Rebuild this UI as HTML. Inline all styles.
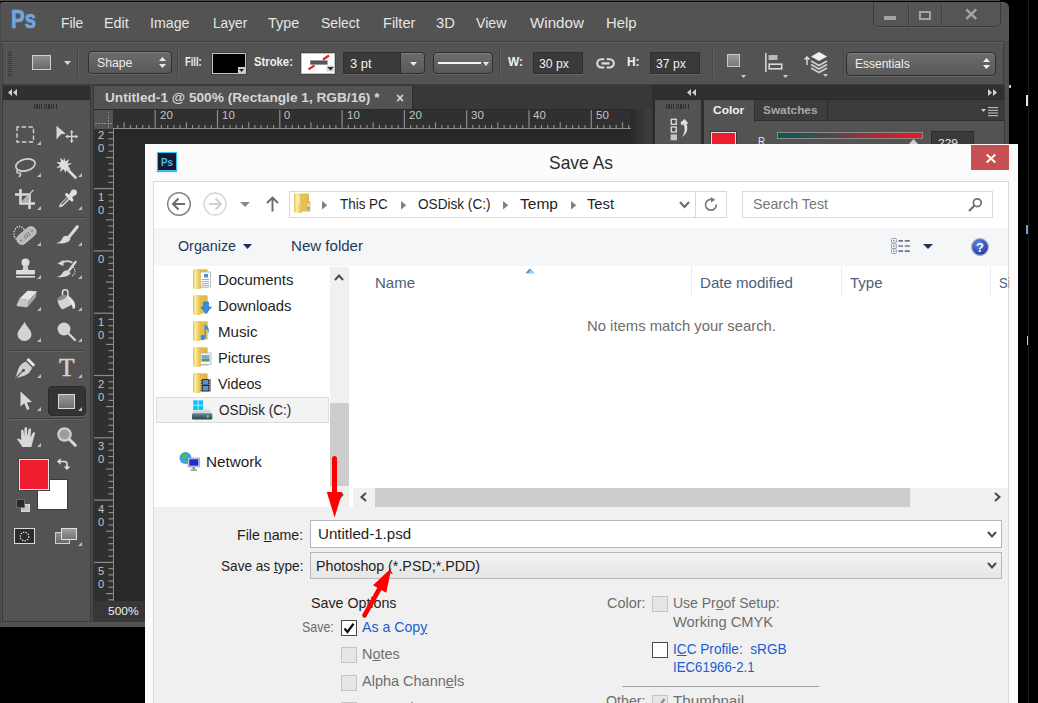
<!DOCTYPE html>
<html><head><meta charset="utf-8"><title>Save As</title>
<style>
html,body{margin:0;padding:0;background:#000;}
body{width:1038px;height:703px;overflow:hidden;position:relative;font-family:"Liberation Sans",sans-serif;}
.r{position:absolute;box-sizing:border-box;}
.t{position:absolute;white-space:nowrap;line-height:1;transform-origin:0 0;font-family:"Liberation Sans",sans-serif;}
svg{position:absolute;overflow:visible;}
u{text-decoration:underline;text-underline-offset:1px;}
</style></head><body>
<div class="r" style="left:0px;top:0px;width:1000px;height:1px;background:#4c4c4c;"></div>
<div class="r" style="left:0px;top:2px;width:1009px;height:625px;background:#535353;border-radius:3px 6px 0 0;border-top:1px solid #626262;"></div>
<div class="r" style="left:0px;top:4px;width:1px;height:623px;background:#484848;"></div>
<div class="r" style="left:1px;top:41px;width:1003px;height:1px;background:#3b3b3b;"></div>
<div class="r" style="left:2px;top:42px;width:1001px;height:1px;background:#636363;"></div>
<span class="t" style="left:11.3px;top:7.0px;font-size:25.8px;color:#70a6de;transform:scaleX(0.792);font-weight:bold;-webkit-text-stroke:0.7px #70a6de;">Ps</span>
<span class="t" style="left:60.7px;top:15.3px;font-size:15px;color:#e6e6e6;transform:scaleX(0.918);">File</span>
<span class="t" style="left:104.0px;top:15.3px;font-size:15px;color:#e6e6e6;transform:scaleX(0.956);">Edit</span>
<span class="t" style="left:150.3px;top:15.3px;font-size:15px;color:#e6e6e6;transform:scaleX(0.947);">Image</span>
<span class="t" style="left:212.5px;top:15.3px;font-size:15px;color:#e6e6e6;transform:scaleX(0.914);">Layer</span>
<span class="t" style="left:267.8px;top:15.3px;font-size:15px;color:#e6e6e6;transform:scaleX(0.966);">Type</span>
<span class="t" style="left:321.4px;top:15.3px;font-size:15px;color:#e6e6e6;transform:scaleX(0.926);">Select</span>
<span class="t" style="left:382.7px;top:15.3px;font-size:15px;color:#e6e6e6;transform:scaleX(0.969);">Filter</span>
<span class="t" style="left:436.2px;top:15.3px;font-size:15px;color:#e6e6e6;transform:scaleX(0.980);">3D</span>
<span class="t" style="left:476.0px;top:15.3px;font-size:15px;color:#e6e6e6;transform:scaleX(0.943);">View</span>
<span class="t" style="left:529.5px;top:15.3px;font-size:15px;color:#e6e6e6;transform:scaleX(1.010);">Window</span>
<span class="t" style="left:605.8px;top:15.3px;font-size:15px;color:#e6e6e6;transform:scaleX(0.985);">Help</span>
<div class="r" style="left:873px;top:2px;width:128px;height:24.5px;background:#555555;border:1px solid #3c3c3c;border-top:none;border-radius:0 0 5px 5px;box-shadow:0 1px 0 #606060;"></div>
<div class="r" style="left:907.5px;top:3px;width:1px;height:22.5px;background:#404040;"></div>
<div class="r" style="left:908.5px;top:3px;width:1px;height:22.5px;background:#5e5e5e;"></div>
<div class="r" style="left:940.5px;top:3px;width:1px;height:22.5px;background:#404040;"></div>
<div class="r" style="left:941.5px;top:3px;width:1px;height:22.5px;background:#5e5e5e;"></div>
<div class="r" style="left:884px;top:16.2px;width:12.4px;height:4px;background:#a4a4a4;"></div>
<div class="r" style="left:919px;top:10.5px;width:12.3px;height:9.8px;background:transparent;border:2px solid #a4a4a4;"></div>
<svg style="left:964.500px;top:9.200px" width="12.500" height="10.200" viewBox="0 0 12.500 10.200"><path d="M1.300 0.300L11.200 9.900M11.200 0.300L1.300 9.900" stroke="#a4a4a4" stroke-width="2.500"/></svg>
<div class="r" style="left:1.5px;top:43px;width:1002.5px;height:42px;background:#535353;border:1px solid #3e3e3e;border-top:none;"></div>
<div class="r" style="left:1004px;top:41px;width:5px;height:45px;background:#4e4e4e;"></div>
<div class="r" style="left:8px;top:51px;width:4px;height:25px;background:transparent;background:repeating-linear-gradient(#3c3c3c 0 1px,#535353 1px 2px);"></div>
<div class="r" style="left:32.4px;top:55.3px;width:18.2px;height:15.2px;background:linear-gradient(#8e8e8e,#6a6a6a);border:1px solid #d0d0d0;"></div>
<svg style="left:64px;top:61px" width="7" height="4"><path d="M0 0H7L3.5 4Z" fill="#d8d8d8"/></svg>
<div class="r" style="left:77px;top:49px;width:1px;height:28px;background:#444;"></div>
<div class="r" style="left:78px;top:49px;width:1px;height:28px;background:#616161;"></div>
<div class="r" style="left:88px;top:51.3px;width:84px;height:23.2px;background:linear-gradient(#6c6c6c,#595959);border:1px solid #2e2e2e;border-radius:4px;box-shadow:0 1px 0 #666,inset 0 1px 0 #7d7d7d;"></div>
<span class="t" style="left:97.3px;top:55.5px;font-size:13px;color:#ececec;transform:scaleX(0.939);">Shape</span>
<svg style="left:159px;top:57px" width="7" height="11"><path d="M0 4H7L3.5 0Z M0 7H7L3.5 11Z" fill="#e8e8e8"/></svg>
<div class="r" style="left:177px;top:49px;width:1px;height:28px;background:#444;"></div>
<div class="r" style="left:178px;top:49px;width:1px;height:28px;background:#616161;"></div>
<span class="t" style="left:185.4px;top:56.3px;font-size:12px;color:#f0f0f0;transform:scaleX(0.778);font-weight:bold;">Fill:</span>
<div class="r" style="left:212.3px;top:52.5px;width:33.5px;height:21px;background:#000;border:1px solid #c4c4c4;box-shadow:0 0 0 1px #444;"></div>
<div class="r" style="left:238px;top:67px;width:7px;height:6px;background:#cfcfcf;"></div>
<svg style="left:239px;top:69px" width="5" height="3"><path d="M0 0H5L2.5 3Z" fill="#222"/></svg>
<span class="t" style="left:254.0px;top:56.3px;font-size:12px;color:#f0f0f0;transform:scaleX(0.941);font-weight:bold;">Stroke:</span>
<div class="r" style="left:301.2px;top:52.5px;width:34.2px;height:21px;background:#fff;border:1px solid #c4c4c4;box-shadow:0 0 0 1px #444;"></div>
<svg style="left:302px;top:53px" width="33" height="20"><path d="M6.500 16.300L12.500 12.300M21 6.500L27 2.500" stroke="#e0202a" stroke-width="2.200"/><rect x="8.200" y="7.400" width="17.300" height="4.200" fill="#555"/><rect x="24.500" y="12.500" width="8" height="6" fill="#d8d8d8"/><path d="M25.300 14H31.700L28.500 17.500Z" fill="#2a2a2a"/></svg>
<div class="r" style="left:343px;top:51.6px;width:58px;height:22.8px;background:#3a3a3a;border:1px solid #2e2e2e;border-right:none;border-radius:2px 0 0 2px;box-shadow:0 1px 0 #666;"></div>
<div class="r" style="left:400px;top:51.6px;width:25px;height:22.8px;background:linear-gradient(#6c6c6c,#595959);border:1px solid #2e2e2e;border-radius:0 4px 4px 0;box-shadow:0 1px 0 #666,inset 0 1px 0 #7d7d7d;"></div>
<svg style="left:410px;top:62px" width="7" height="4"><path d="M0 0H7L3.5 4Z" fill="#e8e8e8"/></svg>
<span class="t" style="left:350.0px;top:56.5px;font-size:13px;color:#f0f0f0;transform:scaleX(0.992);">3 pt</span>
<div class="r" style="left:433px;top:51.6px;width:60px;height:22.8px;background:linear-gradient(#6c6c6c,#595959);border:1px solid #2e2e2e;border-radius:4px;box-shadow:0 1px 0 #666,inset 0 1px 0 #7d7d7d;"></div>
<div class="r" style="left:438px;top:62px;width:43px;height:2px;background:#f4f4f4;"></div>
<svg style="left:483px;top:62px" width="6" height="4"><path d="M0 0H6L3 4Z" fill="#e8e8e8"/></svg>
<div class="r" style="left:499px;top:49px;width:1px;height:28px;background:#444;"></div>
<div class="r" style="left:500px;top:49px;width:1px;height:28px;background:#616161;"></div>
<span class="t" style="left:508.3px;top:55.8px;font-size:12px;color:#f0f0f0;transform:scaleX(0.993);font-weight:bold;">W:</span>
<div class="r" style="left:533px;top:51.6px;width:50px;height:22.8px;background:#3a3a3a;border:1px solid #2e2e2e;box-shadow:0 1px 0 #666;"></div>
<span class="t" style="left:539.0px;top:56.5px;font-size:13px;color:#f0f0f0;transform:scaleX(0.943);">30 px</span>
<svg style="left:595.500px;top:57.500px" width="19" height="11" viewBox="0 0 19 11"><path d="M8.300 1.300H5.300a4.100 4.100 0 0 0 0 8.200H8.300M10.700 1.300H13.700a4.100 4.100 0 0 1 0 8.200H10.700" fill="none" stroke="#dcdcdc" stroke-width="2.100"/><path d="M5.500 5.400H13.500" stroke="#dcdcdc" stroke-width="2.300"/></svg>
<span class="t" style="left:627.4px;top:55.8px;font-size:12px;color:#f0f0f0;transform:scaleX(0.995);font-weight:bold;">H:</span>
<div class="r" style="left:650px;top:51.6px;width:50px;height:22.8px;background:#3a3a3a;border:1px solid #2e2e2e;box-shadow:0 1px 0 #666;"></div>
<span class="t" style="left:655.9px;top:56.5px;font-size:13px;color:#f0f0f0;transform:scaleX(0.937);">37 px</span>
<div class="r" style="left:712px;top:49px;width:1px;height:28px;background:#444;"></div>
<div class="r" style="left:713px;top:49px;width:1px;height:28px;background:#616161;"></div>
<div class="r" style="left:727px;top:54px;width:13px;height:13px;background:linear-gradient(#9a9a9a,#7a7a7a);border:1px solid #c8c8c8;"></div>
<svg style="left:741px;top:75px" width="5" height="3"><path d="M0 0H5L2.5 3Z" fill="#cfcfcf"/></svg>
<svg style="left:765px;top:53px" width="18" height="19"><rect x="0" y="0" width="1.6" height="19" fill="#d0d0d0"/><rect x="3.5" y="2" width="9" height="5" fill="#b8b8b8"/><rect x="4.2" y="11.2" width="12.5" height="4.6" fill="none" stroke="#d8d8d8" stroke-width="1.6"/></svg>
<svg style="left:783px;top:75px" width="5" height="3"><path d="M0 0H5L2.5 3Z" fill="#cfcfcf"/></svg>
<svg style="left:803px;top:51px" width="26" height="26" viewBox="0 0 26 26"><path d="M4 6v8M1.5 8.5L4 6l2.5 2.5" stroke="#e0e0e0" stroke-width="1.4" fill="none"/><path d="M16 1l8 4.5-8 4.5-8-4.5z" fill="#f0f0f0"/><path d="M8 10l8 4.5 8-4.5M8 13.5l8 4.5 8-4.5M8 17l8 4.5 8-4.5" stroke="#cfcfcf" stroke-width="1.8" fill="none"/><path d="M20 23h5l-2.5 3z" fill="#cfcfcf"/></svg>
<div class="r" style="left:843px;top:49px;width:1px;height:28px;background:#444;"></div>
<div class="r" style="left:844px;top:49px;width:1px;height:28px;background:#616161;"></div>
<div class="r" style="left:846px;top:52px;width:150px;height:24px;background:linear-gradient(#6c6c6c,#595959);border:1px solid #2e2e2e;border-radius:4px;box-shadow:0 1px 0 #666,inset 0 1px 0 #7d7d7d;"></div>
<span class="t" style="left:855.0px;top:57.0px;font-size:13px;color:#f0f0f0;transform:scaleX(0.922);">Essentials</span>
<svg style="left:983px;top:58px" width="7" height="11"><path d="M0 4H7L3.5 0Z M0 7H7L3.5 11Z" fill="#f0f0f0"/></svg>
<div class="r" style="left:2px;top:85px;width:89px;height:537px;background:#535353;border:1px solid #3a3a3a;"></div>
<div class="r" style="left:3px;top:85.5px;width:87px;height:13.5px;background:#303030;"></div>
<svg style="left:8px;top:89px" width="9" height="7"><path d="M4 0V7L0 3.5Z M9 0V7L5 3.5Z" fill="#d0d0d0"/></svg>
<div class="r" style="left:3px;top:99px;width:87px;height:1px;background:#2a2a2a;"></div>
<div class="r" style="left:34px;top:104px;width:24px;height:5px;background:transparent;background:repeating-linear-gradient(90deg,#303030 0 1.2px,#535353 1.2px 2.4px);"></div>
<div class="r" style="left:9px;top:217px;width:76px;height:1px;background:#404040;"></div>
<div class="r" style="left:9px;top:218px;width:76px;height:1px;background:#626262;"></div>
<div class="r" style="left:9px;top:350px;width:76px;height:1px;background:#404040;"></div>
<div class="r" style="left:9px;top:351px;width:76px;height:1px;background:#626262;"></div>
<div class="r" style="left:9px;top:418px;width:76px;height:1px;background:#404040;"></div>
<div class="r" style="left:9px;top:419px;width:76px;height:1px;background:#626262;"></div>
<div class="r" style="left:93px;top:85px;width:561px;height:24px;background:#383838;"></div>
<div class="r" style="left:93px;top:86px;width:319.5px;height:23px;background:#535353;border:1px solid #2c2c2c;border-bottom:none;border-top:none;"></div>
<span class="t" style="left:105.0px;top:91.0px;font-size:13px;color:#d6d6d6;transform:scaleX(1.051);font-weight:bold;">Untitled-1 @ 500% (Rectangle 1, RGB/16) *</span>
<span class="t" style="left:395.5px;top:89.8px;font-size:15px;color:#d4d4d4;transform:scaleX(0.913);font-weight:bold;">×</span>
<div class="r" style="left:93px;top:109px;width:561px;height:20px;background:#303030;"></div>
<div class="r" style="left:93px;top:109px;width:561px;height:1px;background:#2a2a2a;"></div>
<div class="r" style="left:94px;top:110px;width:19px;height:19px;background:#535353;background-image:repeating-linear-gradient(90deg,#535353 0 1.5px,transparent 1.5px 3px),linear-gradient(transparent 13px,#8a8a8a 13px,#8a8a8a 14px,transparent 14px),repeating-linear-gradient(#535353 0 1.5px,transparent 1.5px 3px),linear-gradient(90deg,transparent 14px,#8a8a8a 14px,#8a8a8a 15px,transparent 15px);"></div>
<div class="r" style="left:93px;top:129px;width:21px;height:472px;background:#303030;"></div>
<div class="r" style="left:114px;top:129px;width:540px;height:472px;background:#282828;"></div>
<div class="r" style="left:113px;top:128px;width:541px;height:1px;background:#8c8c8c;"></div>
<div class="r" style="left:112.5px;top:129px;width:1px;height:472px;background:#8c8c8c;"></div>
<div class="r" style="left:93px;top:601px;width:561px;height:21px;background:#373737;"></div>
<div class="r" style="left:90px;top:85px;width:1px;height:537px;background:#3a3a3a;"></div>
<div class="r" style="left:91px;top:85px;width:2px;height:537px;background:#484848;"></div>
<div class="r" style="left:93px;top:85px;width:1px;height:537px;background:#353535;"></div>
<span class="t" style="left:107.5px;top:605.5px;font-size:11px;color:#f0f0f0;transform:scaleX(1.084);">500%</span>
<svg style="left:0;top:109px" width="660" height="20"><rect x="117.2" y="16" width="1.2" height="4" fill="#8c8c8c"/><rect x="123.5" y="13.3" width="1.2" height="6.7" fill="#8c8c8c"/><rect x="129.7" y="16" width="1.2" height="4" fill="#8c8c8c"/><rect x="135.9" y="16" width="1.2" height="4" fill="#8c8c8c"/><rect x="142.1" y="16" width="1.2" height="4" fill="#8c8c8c"/><rect x="148.4" y="16" width="1.2" height="4" fill="#8c8c8c"/><rect x="154.6" y="1" width="1.2" height="19" fill="#8c8c8c"/><rect x="160.8" y="16" width="1.2" height="4" fill="#8c8c8c"/><rect x="167.1" y="16" width="1.2" height="4" fill="#8c8c8c"/><rect x="173.3" y="16" width="1.2" height="4" fill="#8c8c8c"/><rect x="179.5" y="16" width="1.2" height="4" fill="#8c8c8c"/><rect x="185.8" y="13.3" width="1.2" height="6.7" fill="#8c8c8c"/><rect x="192.0" y="16" width="1.2" height="4" fill="#8c8c8c"/><rect x="198.2" y="16" width="1.2" height="4" fill="#8c8c8c"/><rect x="204.4" y="16" width="1.2" height="4" fill="#8c8c8c"/><rect x="210.7" y="16" width="1.2" height="4" fill="#8c8c8c"/><rect x="216.9" y="1" width="1.2" height="19" fill="#8c8c8c"/><rect x="223.1" y="16" width="1.2" height="4" fill="#8c8c8c"/><rect x="229.4" y="16" width="1.2" height="4" fill="#8c8c8c"/><rect x="235.6" y="16" width="1.2" height="4" fill="#8c8c8c"/><rect x="241.8" y="16" width="1.2" height="4" fill="#8c8c8c"/><rect x="248.1" y="13.3" width="1.2" height="6.7" fill="#8c8c8c"/><rect x="254.3" y="16" width="1.2" height="4" fill="#8c8c8c"/><rect x="260.5" y="16" width="1.2" height="4" fill="#8c8c8c"/><rect x="266.7" y="16" width="1.2" height="4" fill="#8c8c8c"/><rect x="273.0" y="16" width="1.2" height="4" fill="#8c8c8c"/><rect x="279.2" y="1" width="1.2" height="19" fill="#8c8c8c"/><rect x="285.4" y="16" width="1.2" height="4" fill="#8c8c8c"/><rect x="291.7" y="16" width="1.2" height="4" fill="#8c8c8c"/><rect x="297.9" y="16" width="1.2" height="4" fill="#8c8c8c"/><rect x="304.1" y="16" width="1.2" height="4" fill="#8c8c8c"/><rect x="310.3" y="13.3" width="1.2" height="6.7" fill="#8c8c8c"/><rect x="316.6" y="16" width="1.2" height="4" fill="#8c8c8c"/><rect x="322.8" y="16" width="1.2" height="4" fill="#8c8c8c"/><rect x="329.0" y="16" width="1.2" height="4" fill="#8c8c8c"/><rect x="335.3" y="16" width="1.2" height="4" fill="#8c8c8c"/><rect x="341.5" y="1" width="1.2" height="19" fill="#8c8c8c"/><rect x="347.7" y="16" width="1.2" height="4" fill="#8c8c8c"/><rect x="354.0" y="16" width="1.2" height="4" fill="#8c8c8c"/><rect x="360.2" y="16" width="1.2" height="4" fill="#8c8c8c"/><rect x="366.4" y="16" width="1.2" height="4" fill="#8c8c8c"/><rect x="372.6" y="13.3" width="1.2" height="6.7" fill="#8c8c8c"/><rect x="378.9" y="16" width="1.2" height="4" fill="#8c8c8c"/><rect x="385.1" y="16" width="1.2" height="4" fill="#8c8c8c"/><rect x="391.3" y="16" width="1.2" height="4" fill="#8c8c8c"/><rect x="397.6" y="16" width="1.2" height="4" fill="#8c8c8c"/><rect x="403.8" y="1" width="1.2" height="19" fill="#8c8c8c"/><rect x="410.0" y="16" width="1.2" height="4" fill="#8c8c8c"/><rect x="416.3" y="16" width="1.2" height="4" fill="#8c8c8c"/><rect x="422.5" y="16" width="1.2" height="4" fill="#8c8c8c"/><rect x="428.7" y="16" width="1.2" height="4" fill="#8c8c8c"/><rect x="434.9" y="13.3" width="1.2" height="6.7" fill="#8c8c8c"/><rect x="441.2" y="16" width="1.2" height="4" fill="#8c8c8c"/><rect x="447.4" y="16" width="1.2" height="4" fill="#8c8c8c"/><rect x="453.6" y="16" width="1.2" height="4" fill="#8c8c8c"/><rect x="459.9" y="16" width="1.2" height="4" fill="#8c8c8c"/><rect x="466.1" y="1" width="1.2" height="19" fill="#8c8c8c"/><rect x="472.3" y="16" width="1.2" height="4" fill="#8c8c8c"/><rect x="478.6" y="16" width="1.2" height="4" fill="#8c8c8c"/><rect x="484.8" y="16" width="1.2" height="4" fill="#8c8c8c"/><rect x="491.0" y="16" width="1.2" height="4" fill="#8c8c8c"/><rect x="497.2" y="13.3" width="1.2" height="6.7" fill="#8c8c8c"/><rect x="503.5" y="16" width="1.2" height="4" fill="#8c8c8c"/><rect x="509.7" y="16" width="1.2" height="4" fill="#8c8c8c"/><rect x="515.9" y="16" width="1.2" height="4" fill="#8c8c8c"/><rect x="522.2" y="16" width="1.2" height="4" fill="#8c8c8c"/><rect x="528.4" y="1" width="1.2" height="19" fill="#8c8c8c"/><rect x="534.6" y="16" width="1.2" height="4" fill="#8c8c8c"/><rect x="540.9" y="16" width="1.2" height="4" fill="#8c8c8c"/><rect x="547.1" y="16" width="1.2" height="4" fill="#8c8c8c"/><rect x="553.3" y="16" width="1.2" height="4" fill="#8c8c8c"/><rect x="559.6" y="13.3" width="1.2" height="6.7" fill="#8c8c8c"/><rect x="565.8" y="16" width="1.2" height="4" fill="#8c8c8c"/><rect x="572.0" y="16" width="1.2" height="4" fill="#8c8c8c"/><rect x="578.2" y="16" width="1.2" height="4" fill="#8c8c8c"/><rect x="584.5" y="16" width="1.2" height="4" fill="#8c8c8c"/><rect x="590.7" y="1" width="1.2" height="19" fill="#8c8c8c"/><rect x="596.9" y="16" width="1.2" height="4" fill="#8c8c8c"/><rect x="603.2" y="16" width="1.2" height="4" fill="#8c8c8c"/><rect x="609.4" y="16" width="1.2" height="4" fill="#8c8c8c"/><rect x="615.6" y="16" width="1.2" height="4" fill="#8c8c8c"/><rect x="621.9" y="13.3" width="1.2" height="6.7" fill="#8c8c8c"/><rect x="628.1" y="16" width="1.2" height="4" fill="#8c8c8c"/><rect x="634.3" y="16" width="1.2" height="4" fill="#8c8c8c"/><rect x="640.5" y="16" width="1.2" height="4" fill="#8c8c8c"/><rect x="646.8" y="16" width="1.2" height="4" fill="#8c8c8c"/></svg>
<span class="t" style="left:159.6px;top:110.4px;font-size:11px;color:#c4c4c4;transform:scaleX(1.046);">20</span>
<span class="t" style="left:221.9px;top:110.4px;font-size:11px;color:#c4c4c4;transform:scaleX(1.046);">10</span>
<span class="t" style="left:284.2px;top:110.4px;font-size:11px;color:#c4c4c4;transform:scaleX(1.013);">0</span>
<span class="t" style="left:346.5px;top:110.4px;font-size:11px;color:#c4c4c4;transform:scaleX(1.046);">10</span>
<span class="t" style="left:408.8px;top:110.4px;font-size:11px;color:#c4c4c4;transform:scaleX(1.046);">20</span>
<span class="t" style="left:471.1px;top:110.4px;font-size:11px;color:#c4c4c4;transform:scaleX(1.046);">30</span>
<span class="t" style="left:533.4px;top:110.4px;font-size:11px;color:#c4c4c4;transform:scaleX(1.046);">40</span>
<span class="t" style="left:595.7px;top:110.4px;font-size:11px;color:#c4c4c4;transform:scaleX(1.046);">50</span>
<svg style="left:93px;top:129px" width="21" height="472"><rect x="15.5" y="2.9" width="4.5" height="1.2" fill="#8c8c8c"/><rect x="15.5" y="9.2" width="4.5" height="1.2" fill="#8c8c8c"/><rect x="15.5" y="15.4" width="4.5" height="1.2" fill="#8c8c8c"/><rect x="15.5" y="21.6" width="4.5" height="1.2" fill="#8c8c8c"/><rect x="13" y="27.9" width="7" height="1.2" fill="#8c8c8c"/><rect x="15.5" y="34.1" width="4.5" height="1.2" fill="#8c8c8c"/><rect x="15.5" y="40.3" width="4.5" height="1.2" fill="#8c8c8c"/><rect x="15.5" y="46.5" width="4.5" height="1.2" fill="#8c8c8c"/><rect x="15.5" y="52.8" width="4.5" height="1.2" fill="#8c8c8c"/><rect x="1" y="59.0" width="19" height="1.2" fill="#8c8c8c"/><rect x="15.5" y="65.2" width="4.5" height="1.2" fill="#8c8c8c"/><rect x="15.5" y="71.5" width="4.5" height="1.2" fill="#8c8c8c"/><rect x="15.5" y="77.7" width="4.5" height="1.2" fill="#8c8c8c"/><rect x="15.5" y="83.9" width="4.5" height="1.2" fill="#8c8c8c"/><rect x="13" y="90.2" width="7" height="1.2" fill="#8c8c8c"/><rect x="15.5" y="96.4" width="4.5" height="1.2" fill="#8c8c8c"/><rect x="15.5" y="102.6" width="4.5" height="1.2" fill="#8c8c8c"/><rect x="15.5" y="108.8" width="4.5" height="1.2" fill="#8c8c8c"/><rect x="15.5" y="115.1" width="4.5" height="1.2" fill="#8c8c8c"/><rect x="1" y="121.3" width="19" height="1.2" fill="#8c8c8c"/><rect x="15.5" y="127.5" width="4.5" height="1.2" fill="#8c8c8c"/><rect x="15.5" y="133.8" width="4.5" height="1.2" fill="#8c8c8c"/><rect x="15.5" y="140.0" width="4.5" height="1.2" fill="#8c8c8c"/><rect x="15.5" y="146.2" width="4.5" height="1.2" fill="#8c8c8c"/><rect x="13" y="152.5" width="7" height="1.2" fill="#8c8c8c"/><rect x="15.5" y="158.7" width="4.5" height="1.2" fill="#8c8c8c"/><rect x="15.5" y="164.9" width="4.5" height="1.2" fill="#8c8c8c"/><rect x="15.5" y="171.1" width="4.5" height="1.2" fill="#8c8c8c"/><rect x="15.5" y="177.4" width="4.5" height="1.2" fill="#8c8c8c"/><rect x="1" y="183.6" width="19" height="1.2" fill="#8c8c8c"/><rect x="15.5" y="189.8" width="4.5" height="1.2" fill="#8c8c8c"/><rect x="15.5" y="196.1" width="4.5" height="1.2" fill="#8c8c8c"/><rect x="15.5" y="202.3" width="4.5" height="1.2" fill="#8c8c8c"/><rect x="15.5" y="208.5" width="4.5" height="1.2" fill="#8c8c8c"/><rect x="13" y="214.8" width="7" height="1.2" fill="#8c8c8c"/><rect x="15.5" y="221.0" width="4.5" height="1.2" fill="#8c8c8c"/><rect x="15.5" y="227.2" width="4.5" height="1.2" fill="#8c8c8c"/><rect x="15.5" y="233.4" width="4.5" height="1.2" fill="#8c8c8c"/><rect x="15.5" y="239.7" width="4.5" height="1.2" fill="#8c8c8c"/><rect x="1" y="245.9" width="19" height="1.2" fill="#8c8c8c"/><rect x="15.5" y="252.1" width="4.5" height="1.2" fill="#8c8c8c"/><rect x="15.5" y="258.4" width="4.5" height="1.2" fill="#8c8c8c"/><rect x="15.5" y="264.6" width="4.5" height="1.2" fill="#8c8c8c"/><rect x="15.5" y="270.8" width="4.5" height="1.2" fill="#8c8c8c"/><rect x="13" y="277.0" width="7" height="1.2" fill="#8c8c8c"/><rect x="15.5" y="283.3" width="4.5" height="1.2" fill="#8c8c8c"/><rect x="15.5" y="289.5" width="4.5" height="1.2" fill="#8c8c8c"/><rect x="15.5" y="295.7" width="4.5" height="1.2" fill="#8c8c8c"/><rect x="15.5" y="302.0" width="4.5" height="1.2" fill="#8c8c8c"/><rect x="1" y="308.2" width="19" height="1.2" fill="#8c8c8c"/><rect x="15.5" y="314.4" width="4.5" height="1.2" fill="#8c8c8c"/><rect x="15.5" y="320.7" width="4.5" height="1.2" fill="#8c8c8c"/><rect x="15.5" y="326.9" width="4.5" height="1.2" fill="#8c8c8c"/><rect x="15.5" y="333.1" width="4.5" height="1.2" fill="#8c8c8c"/><rect x="13" y="339.4" width="7" height="1.2" fill="#8c8c8c"/><rect x="15.5" y="345.6" width="4.5" height="1.2" fill="#8c8c8c"/><rect x="15.5" y="351.8" width="4.5" height="1.2" fill="#8c8c8c"/><rect x="15.5" y="358.0" width="4.5" height="1.2" fill="#8c8c8c"/><rect x="15.5" y="364.3" width="4.5" height="1.2" fill="#8c8c8c"/><rect x="1" y="370.5" width="19" height="1.2" fill="#8c8c8c"/><rect x="15.5" y="376.7" width="4.5" height="1.2" fill="#8c8c8c"/><rect x="15.5" y="383.0" width="4.5" height="1.2" fill="#8c8c8c"/><rect x="15.5" y="389.2" width="4.5" height="1.2" fill="#8c8c8c"/><rect x="15.5" y="395.4" width="4.5" height="1.2" fill="#8c8c8c"/><rect x="13" y="401.6" width="7" height="1.2" fill="#8c8c8c"/><rect x="15.5" y="407.9" width="4.5" height="1.2" fill="#8c8c8c"/><rect x="15.5" y="414.1" width="4.5" height="1.2" fill="#8c8c8c"/><rect x="15.5" y="420.3" width="4.5" height="1.2" fill="#8c8c8c"/><rect x="15.5" y="426.6" width="4.5" height="1.2" fill="#8c8c8c"/><rect x="1" y="432.8" width="19" height="1.2" fill="#8c8c8c"/><rect x="15.5" y="439.0" width="4.5" height="1.2" fill="#8c8c8c"/><rect x="15.5" y="445.3" width="4.5" height="1.2" fill="#8c8c8c"/><rect x="15.5" y="451.5" width="4.5" height="1.2" fill="#8c8c8c"/><rect x="15.5" y="457.7" width="4.5" height="1.2" fill="#8c8c8c"/><rect x="13" y="464.0" width="7" height="1.2" fill="#8c8c8c"/><rect x="15.5" y="470.2" width="4.5" height="1.2" fill="#8c8c8c"/></svg>
<span class="t" style="left:97.7px;top:129.7px;font-size:11px;color:#c4c4c4;transform:scaleX(1.013);">2</span>
<span class="t" style="left:97.7px;top:142.7px;font-size:11px;color:#c4c4c4;transform:scaleX(1.013);">0</span>
<span class="t" style="left:97.7px;top:192.0px;font-size:11px;color:#c4c4c4;transform:scaleX(1.013);">1</span>
<span class="t" style="left:97.7px;top:205.0px;font-size:11px;color:#c4c4c4;transform:scaleX(1.013);">0</span>
<span class="t" style="left:97.7px;top:254.3px;font-size:11px;color:#c4c4c4;transform:scaleX(1.013);">0</span>
<span class="t" style="left:97.7px;top:316.6px;font-size:11px;color:#c4c4c4;transform:scaleX(1.013);">1</span>
<span class="t" style="left:97.7px;top:329.6px;font-size:11px;color:#c4c4c4;transform:scaleX(1.013);">0</span>
<span class="t" style="left:97.7px;top:378.9px;font-size:11px;color:#c4c4c4;transform:scaleX(1.013);">2</span>
<span class="t" style="left:97.7px;top:391.9px;font-size:11px;color:#c4c4c4;transform:scaleX(1.013);">0</span>
<span class="t" style="left:97.7px;top:441.2px;font-size:11px;color:#c4c4c4;transform:scaleX(1.013);">3</span>
<span class="t" style="left:97.7px;top:454.2px;font-size:11px;color:#c4c4c4;transform:scaleX(1.013);">0</span>
<span class="t" style="left:97.7px;top:503.5px;font-size:11px;color:#c4c4c4;transform:scaleX(1.013);">4</span>
<span class="t" style="left:97.7px;top:516.5px;font-size:11px;color:#c4c4c4;transform:scaleX(1.013);">0</span>
<span class="t" style="left:97.7px;top:565.8px;font-size:11px;color:#c4c4c4;transform:scaleX(1.013);">5</span>
<span class="t" style="left:97.7px;top:578.8px;font-size:11px;color:#c4c4c4;transform:scaleX(1.013);">0</span>
<div class="r" style="left:631px;top:109px;width:21px;height:492px;background:linear-gradient(90deg,#2a2a2a,#3f3f3f);"></div>
<div class="r" style="left:651.5px;top:85px;width:3px;height:537px;background:#2f2f2f;"></div>
<div class="r" style="left:654px;top:85px;width:351px;height:60px;background:#535353;border-left:1px solid #2a2a2a;"></div>
<div class="r" style="left:655px;top:85px;width:349px;height:14px;background:#303030;"></div>
<svg style="left:687px;top:89px" width="9" height="7"><path d="M4 0V7L0 3.5Z M9 0V7L5 3.5Z" fill="#d0d0d0"/></svg>
<svg style="left:988px;top:89px" width="9" height="7"><path d="M0 0V7L4 3.5Z M5 0V7L9 3.5Z" fill="#d0d0d0"/></svg>
<div class="r" style="left:655px;top:99px;width:350px;height:1px;background:#2a2a2a;"></div>
<div class="r" style="left:701px;top:99px;width:3px;height:46px;background:#2e2e2e;"></div>
<div class="r" style="left:666px;top:104px;width:24px;height:5px;background:transparent;background:repeating-linear-gradient(90deg,#303030 0 1.2px,#535353 1.2px 2.4px);"></div>
<svg style="left:670px;top:117px" width="22" height="26"><rect x="1.3" y="2.3" width="5" height="5" fill="none" stroke="#d4d4d4" stroke-width="1.4"/><rect x="1.3" y="10" width="5" height="5" fill="none" stroke="#d4d4d4" stroke-width="1.4"/><rect x="0.6" y="17.3" width="6.400" height="6" fill="#c4c4c4"/><path d="M10.500 5.500l4-3.500l4 4.500l-2 .2c1.800 5 .8 10-4.500 13.300c3-4.500 3.300-8.500 1.500-12.800l-2 1.300z" fill="#e0e0e0"/></svg>
<div class="r" style="left:704px;top:100px;width:301px;height:21px;background:#3b3b3b;border-bottom:1px solid #2e2e2e;"></div>
<div class="r" style="left:704px;top:100px;width:51px;height:22px;background:#535353;border-right:1px solid #2e2e2e;"></div>
<div class="r" style="left:755px;top:100px;width:72.5px;height:21px;background:#3d3d3d;border-right:1px solid #2e2e2e;border-bottom:1px solid #2e2e2e;"></div>
<span class="t" style="left:713.0px;top:105.0px;font-size:11.8px;color:#f0f0f0;transform:scaleX(1.013);font-weight:bold;">Color</span>
<span class="t" style="left:762.5px;top:105.0px;font-size:11.8px;color:#a8a8a8;transform:scaleX(1.001);font-weight:bold;">Swatches</span>
<svg style="left:981px;top:107px" width="17" height="10"><path d="M0 2H5L2.5 5Z" fill="#c8c8c8"/><path d="M7 0.600H17M7 3.300H17M7 6H17M7 8.700H17" stroke="#c8c8c8" stroke-width="1"/></svg>
<div class="r" style="left:711px;top:132.3px;width:24.5px;height:14px;background:#ed1c2e;border:1.500px solid #e0e0e0;box-shadow:0 0 0 1px #3a3a3a;"></div>
<span class="t" style="left:758.0px;top:135.7px;font-size:11px;color:#e8e8e8;transform:scaleX(0.881);">R</span>
<div class="r" style="left:777px;top:132px;width:146px;height:7px;background:linear-gradient(90deg,#075a55,#4a4a4a 35%,#a03038 65%,#f01428);border:1px solid #8a8a8a;"></div>
<svg style="left:909px;top:139px" width="9" height="5"><path d="M0 5H9L4.5 0Z" fill="#cfcfcf"/></svg>
<div class="r" style="left:931px;top:131px;width:43px;height:14px;background:#3a3a3a;border:1px solid #2c2c2c;"></div>
<span class="t" style="left:938.0px;top:137.7px;font-size:11px;color:#e8e8e8;transform:scaleX(1.090);">229</span>
<div class="r" style="left:1004px;top:86px;width:1px;height:540px;background:#3a3a3a;"></div>
<div class="r" style="left:1005px;top:86px;width:4px;height:540px;background:#4e4e4e;"></div>
<div class="r" style="left:1028px;top:0px;width:1px;height:703px;background:#1c1c1c;"></div>
<div class="r" style="left:1026px;top:225px;width:2px;height:9px;background:#6aa0d8;"></div>
<div class="r" style="left:1026px;top:95px;width:1.6px;height:11px;background:#d4ecdc;"></div>
<div class="r" style="left:1009.3px;top:85px;width:2px;height:2.5px;background:#b0d0b8;"></div>
<div class="r" style="left:1026.5px;top:336px;width:1.6px;height:9px;background:#c8c8c8;"></div>
<svg style="left:16px;top:125.5px" width="18.5" height="17" viewBox="0 0 18.5 17"><rect x="1" y="1" width="16.500" height="15" fill="none" stroke="#d2d2d2" stroke-width="1.400" stroke-dasharray="4.500 2.300" stroke-dashoffset="2.200"/></svg>
<svg style="left:36.9px;top:141px" width="4" height="4" viewBox="0 0 4 4"><path d="M4 0V4H0Z" fill="#bdbdbd"/></svg>
<svg style="left:56px;top:125px" width="22" height="20" viewBox="0 0 22 20"><path d="M0.500 0.800L9.800 8.800L5 9.300L0.500 14.500Z" fill="#d6d6d6"/><path d="M15.700 6.500v10M10.700 11.500h10" stroke="#d6d6d6" stroke-width="1.300"/><path d="M15.700 5l2 2.600h-4zM15.700 18l2-2.600h-4zM9.200 11.500l2.600-2v4zM22.200 11.500l-2.600-2v4z" fill="#d6d6d6"/></svg>
<svg style="left:14px;top:157px" width="22" height="21" viewBox="0 0 22 21"><ellipse cx="11.500" cy="8" rx="9.800" ry="5.800" transform="rotate(-14 11.500 8)" fill="none" stroke="#d0d0d0" stroke-width="1.700"/><path d="M4 12.500c-2 1.500-1.500 4 1 3.500c2.500-.5 2 3-.3 3.800" fill="none" stroke="#d0d0d0" stroke-width="1.500"/></svg>
<svg style="left:36.9px;top:173px" width="4" height="4" viewBox="0 0 4 4"><path d="M4 0V4H0Z" fill="#bdbdbd"/></svg>
<svg style="left:55px;top:156.5px" width="23" height="22" viewBox="0 0 23 22"><path d="M9 0l1.300 4.500l4-2.500l-2 4.200l4.700.3l-4.200 2.300l3 3.700l-4.600-1.200l-.4 4.700l-2.300-4l-3.500 3l1-4.500l-4.700.2l3.800-2.800l-3.600-3l4.700.3l-1.200-4.500l3.700 3z" fill="#e0e0e0"/><path d="M11.500 11.500L20.500 20.500" stroke="#dcdcdc" stroke-width="2.600" stroke-linecap="round"/></svg>
<svg style="left:78.4px;top:173px" width="4" height="4" viewBox="0 0 4 4"><path d="M4 0V4H0Z" fill="#bdbdbd"/></svg>
<svg style="left:15px;top:189px" width="20" height="20" viewBox="0 0 20 20"><path d="M0 5.500h14.500v14.500M5.500 0v14.500h14.500" fill="none" stroke="#d8d8d8" stroke-width="2.600"/><path d="M7.500 12.500L18.500 1" stroke="#c8c8c8" stroke-width="1.200"/><path d="M7 13h6.500v-6.500z" fill="#b0b0b0"/></svg>
<svg style="left:36.9px;top:205.5px" width="4" height="4" viewBox="0 0 4 4"><path d="M4 0V4H0Z" fill="#bdbdbd"/></svg>
<svg style="left:56.5px;top:188.5px" width="20" height="20" viewBox="0 0 20 20"><path d="M1.200 19l1.300-4l8.500-8.500l3 3l-8.500 8.500z" fill="#dcdcdc" stroke="#3c3c3c" stroke-width=".7"/><path d="M4.500 15.500l7-7" stroke="#5a5a5a" stroke-width="1.300"/><path d="M9.500 5.500l5.500 5.500" stroke="#e4e4e4" stroke-width="3" stroke-linecap="round"/><path d="M13 7.500l3.500-3.500" stroke="#dcdcdc" stroke-width="4.600" stroke-linecap="round"/><circle cx="16.800" cy="3.500" r="3.100" fill="#e2e2e2"/></svg>
<svg style="left:78.4px;top:205.5px" width="4" height="4" viewBox="0 0 4 4"><path d="M4 0V4H0Z" fill="#bdbdbd"/></svg>
<svg style="left:13px;top:225px" width="25" height="21" viewBox="0 0 25 21"><ellipse cx="6.500" cy="8.500" rx="5.500" ry="7" fill="none" stroke="#e8e8e8" stroke-width="1.300" stroke-dasharray="1.300 1.300"/><rect x="2.500" y="5.500" width="22" height="10" rx="5" transform="rotate(-40 13.500 10.500)" fill="#b8b8b8" stroke="#d8d8d8" stroke-width=".8"/><g fill="#6a6a6a"><circle cx="11.500" cy="11" r=".8"/><circle cx="13.500" cy="9.500" r=".8"/><circle cx="15.500" cy="8" r=".8"/><circle cx="12.500" cy="13" r=".8"/><circle cx="14.500" cy="11.500" r=".8"/><circle cx="16.500" cy="10" r=".8"/><circle cx="8" cy="15.500" r=".8"/><circle cx="19" cy="6" r=".8"/></g></svg>
<svg style="left:36.9px;top:242px" width="4" height="4" viewBox="0 0 4 4"><path d="M4 0V4H0Z" fill="#bdbdbd"/></svg>
<svg style="left:55px;top:225px" width="24" height="21" viewBox="0 0 24 21"><path d="M22.300 1.700L14 12" stroke="#dadada" stroke-width="3" stroke-linecap="round"/><path d="M12.300 11l3.200 2.700c-1 3.300-5 5.300-14.800 4.600c3.600-.8 5.200-2 6.300-4.300c1.100-2.300 3.300-3.600 5.300-3z" fill="#dadada"/></svg>
<svg style="left:78.4px;top:242px" width="4" height="4" viewBox="0 0 4 4"><path d="M4 0V4H0Z" fill="#bdbdbd"/></svg>
<svg style="left:14.5px;top:258px" width="21" height="21" viewBox="0 0 21 21"><circle cx="10.500" cy="4.500" r="4" fill="#dcdcdc"/><path d="M8.500 7h4l1 5.500h-6z" fill="#d0d0d0"/><rect x="1" y="12" width="19" height="4.600" rx="1" fill="#dcdcdc"/><rect x="1" y="18" width="19" height="1.600" fill="#dcdcdc"/></svg>
<svg style="left:36.9px;top:274.5px" width="4" height="4" viewBox="0 0 4 4"><path d="M4 0V4H0Z" fill="#bdbdbd"/></svg>
<svg style="left:55px;top:257.5px" width="24" height="22" viewBox="0 0 24 22"><path d="M20.500 4L12.500 14.500" stroke="#d8d8d8" stroke-width="2.400" stroke-linecap="round"/><path d="M13.500 13l2.300 2.300c-2.500 3.500-7.500 4.500-14 3.800c3.300-1 4.700-2.300 6-4.600c1.400-1.800 3.800-2.400 5.700-1.500z" fill="#d8d8d8"/><path d="M7 5c3-2.500 8-2.500 10.500 0" fill="none" stroke="#d8d8d8" stroke-width="1.600"/><path d="M2.500 5.500l6-3.500v6z" fill="#d8d8d8"/><path d="M18 9c3 2.500 2.500 7-1 9" fill="none" stroke="#e8e8e8" stroke-width="1.100" stroke-dasharray="1.200 1.200"/></svg>
<svg style="left:78.4px;top:274.5px" width="4" height="4" viewBox="0 0 4 4"><path d="M4 0V4H0Z" fill="#bdbdbd"/></svg>
<svg style="left:15.5px;top:290px" width="22" height="19" viewBox="0 0 22 19"><path d="M3.500 8.500l7.500-7.300q.6-.6 1.500-.5l7.800 .5q1 .1 .3 1l-7.600 8z" fill="#e4e4e4"/><path d="M3.500 8.500l9.500 1.700l-1.300 6.300q-.2 .8-1 .7l-9.300-1q-1-.2-.8-1.200z" fill="#c6c6c6"/><path d="M13 10.200l7.600-8l-.9 5.300l-7.600 9q-.5 .5-.4-.3z" fill="#a6a6a6"/></svg>
<svg style="left:36.9px;top:306.5px" width="4" height="4" viewBox="0 0 4 4"><path d="M4 0V4H0Z" fill="#bdbdbd"/></svg>
<svg style="left:55.5px;top:289px" width="23" height="21" viewBox="0 0 23 21"><path d="M6.500 8v-4.500a2.700 2.700 0 0 1 5.400 0v6" fill="none" stroke="#e0e0e0" stroke-width="1.500"/><path d="M1.500 10.500l9-4l5 9.500l-9 4.500c-2.500-1.500-5-6.500-5-10z" fill="#d4d4d4"/><path d="M10.500 6.500c3 .5 6.500 3.500 8 7c1 2 .5 4 .5 5.500c-.8 1-2.200 1-2.600 0c.5-2-1-3.500-2-4z" fill="#e4e4e4"/><ellipse cx="6" cy="8.700" rx="4.800" ry="2" transform="rotate(-24 6 8.700)" fill="#8a8a8a"/></svg>
<svg style="left:78.4px;top:307px" width="4" height="4" viewBox="0 0 4 4"><path d="M4 0V4H0Z" fill="#bdbdbd"/></svg>
<svg style="left:17px;top:322.3px" width="15" height="19" viewBox="0 0 15 19"><path d="M7.500 0c2.500 5 7 8.500 7 12.500a7 6.500 0 0 1-14 0c0-4 4.500-7.500 7-12.500z" fill="#d4d4d4"/></svg>
<svg style="left:36.9px;top:338.3px" width="4" height="4" viewBox="0 0 4 4"><path d="M4 0V4H0Z" fill="#bdbdbd"/></svg>
<svg style="left:57px;top:322.3px" width="20" height="20" viewBox="0 0 20 20"><circle cx="7" cy="7" r="6.500" fill="#d4d4d4"/><path d="M11.500 11.500L18 18" stroke="#d4d4d4" stroke-width="2.400" stroke-linecap="round"/></svg>
<svg style="left:78.4px;top:338.3px" width="4" height="4" viewBox="0 0 4 4"><path d="M4 0V4H0Z" fill="#bdbdbd"/></svg>
<svg style="left:14.3px;top:356.3px" width="23.5" height="23.5" viewBox="0 0 22.500 23"><path d="M14 2l6.500 6.500-2 2l-6.500-6.500z" fill="#e8e8e8"/><path d="M11.500 5.500l6 6c-1 3-3.500 6-7 7.500l-9.500 3l3-9.500c1.500-3.500 4.500-6 7.500-7z" fill="#d0d0d0"/><path d="M1.500 21.500l7-7" stroke="#535353" stroke-width="1.200"/><circle cx="9" cy="14" r="1.500" fill="#535353"/></svg>
<svg style="left:36.9px;top:374px" width="4" height="4" viewBox="0 0 4 4"><path d="M4 0V4H0Z" fill="#bdbdbd"/></svg>
<span class="t" style="left:58.500px;top:356.300px;font-size:24.200px;color:#d2d2d2;-webkit-text-stroke:0.5px #d2d2d2;font-family:'Liberation Serif',serif;transform:scaleX(1.05)">T</span>
<svg style="left:78.4px;top:374px" width="4" height="4" viewBox="0 0 4 4"><path d="M4 0V4H0Z" fill="#bdbdbd"/></svg>
<svg style="left:20px;top:391px" width="12.5" height="20" viewBox="0 0 12.5 20"><path d="M0.500 0.500v15l3.800-3.300l2.700 6.800l2.600-1.100l-2.700-6.400l5.100-.5z" fill="#d8d8d8"/></svg>
<svg style="left:36.9px;top:407px" width="4" height="4" viewBox="0 0 4 4"><path d="M4 0V4H0Z" fill="#bdbdbd"/></svg>
<div class="r" style="left:47.5px;top:386px;width:38px;height:29.5px;background:#343434;border-radius:4px;border:1px solid #2a2a2a;box-shadow:0 1px 0 #626262;"></div>
<div class="r" style="left:57.5px;top:394px;width:17.5px;height:14.5px;background:linear-gradient(#989898,#707070);border:1px solid #dadada;"></div>
<svg style="left:78.4px;top:407px" width="4" height="4" viewBox="0 0 4 4"><path d="M4 0V4H0Z" fill="#bdbdbd"/></svg>
<svg style="left:14.5px;top:426.5px" width="22" height="20.5" viewBox="0 0 18.500 20"><path d="M5.500 19.500c-1-3-3.500-5-5-7.500c.8-1.500 2.500-1 4 1v-9c0-1.600 2.300-1.600 2.400 0l.6 5.500l.3-8c.1-1.600 2.400-1.600 2.500 0l.2 8l1.300-7c.3-1.500 2.500-1.200 2.400.4l-.7 7.600l2.300-4.700c.7-1.400 2.700-.6 2.200.9c-1.200 3.500-2 7.500-3.500 12.800z" fill="#d8d8d8"/></svg>
<svg style="left:36.9px;top:443px" width="4" height="4" viewBox="0 0 4 4"><path d="M4 0V4H0Z" fill="#bdbdbd"/></svg>
<svg style="left:57px;top:427px" width="20" height="20" viewBox="0 0 20 20"><circle cx="7.500" cy="7.500" r="6.200" fill="#9c9c9c" stroke="#cfcfcf" stroke-width="2.200"/><path d="M12.500 12.500L18.300 18.300" stroke="#d8d8d8" stroke-width="3" stroke-linecap="round"/></svg>
<div class="r" style="left:36.5px;top:478.5px;width:31.5px;height:31px;background:#fff;border:1px solid #3a3a3a;"></div>
<div class="r" style="left:18.5px;top:458.5px;width:30.5px;height:31px;background:#ed1c2e;border:1px solid #e4e4e4;box-shadow:0 0 0 1px #444;"></div>
<svg style="left:57px;top:457px" width="13" height="13" viewBox="0 0 13 13"><path d="M3 4.500h4.500a2.500 2.500 0 0 1 2.500 2.500v3" fill="none" stroke="#e0e0e0" stroke-width="1.500"/><path d="M0 4.500l3.600-3.300v6.600zM10 13l-3.300-3.600h6.600z" fill="#e0e0e0"/></svg>
<div class="r" style="left:21px;top:503.5px;width:8.5px;height:8px;background:#c4c4c4;border:1px solid #d8d8d8;"></div>
<div class="r" style="left:16px;top:499px;width:8.5px;height:8.5px;background:#2a2a2a;border:1.500px solid #6a6a6a;"></div>
<div class="r" style="left:14px;top:527.5px;width:21px;height:16.5px;background:#2c2c2c;border:1.500px solid #dcdcdc;"></div>
<svg style="left:19px;top:530.5px" width="11" height="11" viewBox="0 0 11 11"><circle cx="5.500" cy="5.500" r="4.300" fill="none" stroke="#f0f0f0" stroke-width="1.200" stroke-dasharray="1.300 1.300"/></svg>
<div class="r" style="left:55px;top:531.5px;width:15px;height:12.5px;background:linear-gradient(#909090,#6a6a6a);border:1px solid #d0d0d0;"></div>
<div class="r" style="left:61px;top:527.5px;width:15.5px;height:12.5px;background:linear-gradient(#a0a0a0,#747474);border:1.500px solid #e0e0e0;"></div>
<svg style="left:78.4px;top:541.5px" width="4" height="4" viewBox="0 0 4 4"><path d="M4 0V4H0Z" fill="#bdbdbd"/></svg>
<svg width="0" height="0" style="left:0;top:0"><defs><linearGradient id="fg1" x1="0" x2="1" y1="0" y2="0"><stop offset="0" stop-color="#e6be50"/><stop offset="0.3" stop-color="#f9f0a2"/><stop offset="0.62" stop-color="#efd572"/><stop offset="1" stop-color="#e2b848"/></linearGradient><linearGradient id="fg2" x1="0" x2="1" y1="0" y2="0"><stop offset="0" stop-color="#e9c95e"/><stop offset="1" stop-color="#e0b544"/></linearGradient></defs></svg>
<div class="r" style="left:144.5px;top:143.5px;width:873.7px;height:570px;background:#fbfbfb;"></div>
<span class="t" style="left:549.0px;top:154.0px;font-size:18.5px;color:#2e2e2e;transform:scaleX(0.943);">Save As</span>
<div class="r" style="left:157px;top:152px;width:20px;height:19px;background:#1b1a30;border:1px solid #31c8f4;box-shadow:0 1px 1px rgba(0,0,0,.4);"></div>
<span class="t" style="left:161.0px;top:156.8px;font-size:11.5px;color:#3fc3ee;transform:scaleX(0.853);font-weight:bold;">Ps</span>
<div class="r" style="left:971px;top:145px;width:38px;height:25px;background:#c75050;"></div>
<svg style="left:986px;top:153.5px" width="10" height="9"><path d="M0.7 0.5L9.3 8.5M9.3 0.5L0.7 8.5" stroke="#fff" stroke-width="1.9"/></svg>
<div class="r" style="left:153px;top:181px;width:856px;height:530px;background:#f0f0f0;border:1px solid #d9d9d9;"></div>
<div class="r" style="left:154px;top:182px;width:854px;height:46px;background:#ffffff;"></div>
<svg style="left:166px;top:191px" width="26" height="26" viewBox="0 0 26 26"><circle cx="13" cy="13" r="11.300" fill="none" stroke="#7e7e7e" stroke-width="1.400"/><path d="M19 13H7.500M12.500 7.500L7 13l5.500 5.500" fill="none" stroke="#6a6a6a" stroke-width="2"/></svg>
<svg style="left:202px;top:191px" width="26" height="26" viewBox="0 0 26 26"><circle cx="13" cy="13" r="11" fill="none" stroke="#d6d6d6" stroke-width="1.3"/><path d="M7 13H18.5M13.5 7.5L19 13l-5.5 5.5" fill="none" stroke="#cfcfcf" stroke-width="2"/></svg>
<svg style="left:240px;top:202px" width="10" height="5"><path d="M0 0H10L5 5Z" fill="#8a8a8a"/></svg>
<svg style="left:266px;top:196px" width="13" height="16" viewBox="0 0 13 16"><path d="M6.5 15.5V2M1 7L6.5 1.5L12 7" fill="none" stroke="#686868" stroke-width="1.900"/></svg>
<div class="r" style="left:289px;top:191px;width:407px;height:27px;background:#fff;border:1px solid #d9d9d9;"></div>
<div class="r" style="left:695px;top:191px;width:32px;height:27px;background:#fff;border:1px solid #d9d9d9;"></div>
<svg style="left:294px;top:193px" width="17" height="20" viewBox="0 0 17 20"><path d="M7 0.500h7a1 1 0 0 1 1 1v6.500l1.300 .5v10h-9.300z" fill="url(#fg2)"/><path d="M0 1.200q0-.8 .8-.8h6.700l1 .6v18.400l-2.500 .6h-3.500l-2.500-1z" fill="url(#fg1)"/><path d="M4.300 2.500l1.200-.2v9l-1 .2z" fill="#fffbe0" opacity=".8"/><rect x="13.700" y="10.500" width="1.500" height="5" fill="#f4ecc0"/><rect x="13.700" y="14" width="1.500" height="2" fill="#3aa0d0"/></svg>
<svg style="left:322px;top:200.5px" width="5.5" height="8.5"><path d="M0 0L5.300 4.250L0 8.500Z" fill="#808080"/></svg>
<span class="t" style="left:339.8px;top:196.9px;font-size:14.5px;color:#1e1e1e;transform:scaleX(0.925);">This PC</span>
<svg style="left:400.5px;top:200.5px" width="5.5" height="8.5"><path d="M0 0L5.300 4.250L0 8.500Z" fill="#808080"/></svg>
<span class="t" style="left:417.5px;top:196.9px;font-size:14.5px;color:#1e1e1e;transform:scaleX(0.938);">OSDisk (C:)</span>
<svg style="left:502.5px;top:200.5px" width="5.5" height="8.5"><path d="M0 0L5.300 4.250L0 8.500Z" fill="#808080"/></svg>
<span class="t" style="left:519.5px;top:196.9px;font-size:14.5px;color:#1e1e1e;transform:scaleX(1.072);">Temp</span>
<svg style="left:570.5px;top:200.5px" width="5.5" height="8.5"><path d="M0 0L5.300 4.250L0 8.500Z" fill="#808080"/></svg>
<span class="t" style="left:586.5px;top:196.9px;font-size:14.5px;color:#1e1e1e;transform:scaleX(1.015);">Test</span>
<svg style="left:679px;top:201px" width="11" height="8"><path d="M1 1L5.5 6L10 1" fill="none" stroke="#6a6a6a" stroke-width="2"/></svg>
<svg style="left:704px;top:197px" width="14" height="15" viewBox="0 0 14 15"><path d="M8.5 2.6A5.4 5.4 0 1 0 12.3 7.4" fill="none" stroke="#7a7a7a" stroke-width="1.7"/><path d="M6.8 0L11.3 2.7L7 5.6Z" fill="#7a7a7a"/></svg>
<div class="r" style="left:742px;top:191px;width:251px;height:27px;background:#fff;border:1px solid #d9d9d9;"></div>
<span class="t" style="left:753.0px;top:196.9px;font-size:14.5px;color:#767676;transform:scaleX(0.983);">Search Test</span>
<svg style="left:968px;top:197px" width="15" height="15" viewBox="0 0 15 15"><circle cx="9.3" cy="5.7" r="3.9" fill="none" stroke="#6e6e6e" stroke-width="1.7"/><path d="M6.5 8.5L1 14" stroke="#6e6e6e" stroke-width="2.2"/></svg>
<div class="r" style="left:154px;top:228px;width:854px;height:38px;background:#f5f6f8;"></div>
<div class="r" style="left:154px;top:266px;width:854px;height:1px;background:#e9ebef;"></div>
<span class="t" style="left:177.5px;top:239.3px;font-size:14.5px;color:#1e395b;transform:scaleX(0.986);">Organize</span>
<svg style="left:243px;top:244px" width="9" height="5"><path d="M0 0H9L4.5 5Z" fill="#1e3260"/></svg>
<span class="t" style="left:290.5px;top:239.3px;font-size:14.5px;color:#1e395b;transform:scaleX(1.039);">New folder</span>
<svg style="left:891px;top:238px" width="20" height="17" viewBox="0 0 20 17"><g fill="#fff" stroke="#7f92b4" stroke-width=".9"><rect x="0.500" y="0.500" width="4.800" height="4.600" rx=".8"/><rect x="0.500" y="5.700" width="4.800" height="4.600" rx=".8"/><rect x="0.500" y="10.900" width="4.800" height="4.600" rx=".8"/></g><rect x="2.300" y="1.900" width="1.200" height="1.800" fill="#3a9a3a"/><rect x="2.300" y="7.100" width="1.200" height="1.800" fill="#e04030"/><rect x="2.300" y="12.300" width="1.200" height="1.800" fill="#3a6ae0"/><path d="M7.500 2.800h4.500M13.800 2.800h5M7.500 8h4.500M13.800 8h5M7.500 13.200h4.500M13.800 13.200h5" stroke="#6a7688" stroke-width="1.700"/></svg>
<svg style="left:923px;top:244px" width="10" height="5"><path d="M0 0H10L5 5Z" fill="#1e3260"/></svg>
<svg style="left:970.5px;top:238px" width="18" height="18" viewBox="0 0 18 18"><defs><radialGradient id="hg" cx="0.4" cy="0.3" r="0.8"><stop offset="0" stop-color="#5f86e8"/><stop offset="1" stop-color="#1a2f9a"/></radialGradient></defs><circle cx="9" cy="9" r="8.3" fill="url(#hg)" stroke="#9aa0b8" stroke-width="1.2"/><text x="9" y="13.6" font-family="Liberation Sans" font-weight="bold" font-size="13" fill="#fff" text-anchor="middle">?</text></svg>
<div class="r" style="left:154px;top:266px;width:854px;height:241px;background:#ffffff;"></div>
<div class="r" style="left:330px;top:267px;width:18.5px;height:240px;background:#f0f0f0;"></div>
<div class="r" style="left:330px;top:403px;width:18.5px;height:83px;background:#cdcdcd;"></div>
<svg style="left:334.300px;top:274px" width="10" height="7"><path d="M1 6L5 1.5L9 6" fill="none" stroke="#4a4a4a" stroke-width="2"/></svg>
<svg style="left:334.300px;top:493px" width="10" height="7"><path d="M1 1L5 5.5L9 1" fill="none" stroke="#4a4a4a" stroke-width="2"/></svg>
<div class="r" style="left:353px;top:488px;width:655px;height:19px;background:#f0f0f0;"></div>
<div class="r" style="left:375px;top:488px;width:535px;height:19px;background:#cdcdcd;"></div>
<svg style="left:360px;top:492px" width="7" height="10"><path d="M6 1L1.5 5L6 9" fill="none" stroke="#4a4a4a" stroke-width="2"/></svg>
<svg style="left:994px;top:492px" width="7" height="10"><path d="M1 1L5.5 5L1 9" fill="none" stroke="#4a4a4a" stroke-width="2"/></svg>
<span class="t" style="left:375.0px;top:275.7px;font-size:14.5px;color:#4c607a;transform:scaleX(1.034);">Name</span>
<span class="t" style="left:700.0px;top:275.7px;font-size:14.5px;color:#4c607a;transform:scaleX(1.039);">Date modified</span>
<span class="t" style="left:849.5px;top:275.7px;font-size:14.5px;color:#4c607a;transform:scaleX(1.034);">Type</span>
<span class="t" style="left:998.5px;top:275.7px;font-size:14.5px;color:#4c607a;transform:scaleX(0.892);clip-path:inset(0 12% 0 0);">Si</span>
<div class="r" style="left:691px;top:266px;width:1px;height:30px;background:#e4ecf7;"></div>
<div class="r" style="left:841px;top:266px;width:1px;height:30px;background:#e4ecf7;"></div>
<div class="r" style="left:990px;top:266px;width:1px;height:30px;background:#e4ecf7;"></div>
<svg style="left:525px;top:267.600px" width="10" height="5.500"><path d="M0.300 5.300L4.800 0.500L9.300 5.300Z" fill="#4f86bc"/><path d="M3.200 5.300L5.300 2L9.300 5.300Z" fill="#9fd0f0"/></svg>
<span class="t" style="left:586.6px;top:319.2px;font-size:14.5px;color:#6d6d6d;transform:scaleX(1.024);">No items match your search.</span>
<svg style="left:193px;top:269px" width="19" height="20" viewBox="0 0 19 20"><path d="M2 0.300h11.500a1.200 1.200 0 0 1 1.200 1.200v17h-12.700z" fill="url(#fg2)"/><rect x="7" y="3" width="10.5" height="15" fill="#fdfdfd" stroke="#a8b0bc" stroke-width=".8"/><rect x="11" y="5" width="4" height="3.4" fill="#4a8ae0"/><path d="M8.5 10.5h7.5M8.5 12.5h7.5M8.5 14.5h7.5M8.5 16.3h7.5" stroke="#9aa" stroke-width=".9"/><path d="M0 1q0-.7 .7-.7h6l1.100 .7v18.400l-2 .6h-3.800l-2-1z" fill="url(#fg1)"/></svg>
<span class="t" style="left:218.0px;top:273.2px;font-size:14.5px;color:#1e1e1e;transform:scaleX(1.029);">Documents</span>
<svg style="left:193px;top:295px" width="19" height="20" viewBox="0 0 19 20"><path d="M2 0.300h11.500a1.200 1.200 0 0 1 1.200 1.200v17h-12.700z" fill="url(#fg2)"/><path d="M10.5 7h5v5h3l-5.500 6.500l-5.500-6.500h3z" fill="#2f8ee6" stroke="#1c6cc0" stroke-width=".6"/><path d="M0 1q0-.7 .7-.7h6l1.100 .7v18.400l-2 .6h-3.800l-2-1z" fill="url(#fg1)"/></svg>
<span class="t" style="left:218.0px;top:299.2px;font-size:14.5px;color:#1e1e1e;transform:scaleX(1.025);">Downloads</span>
<svg style="left:193px;top:321px" width="19" height="20" viewBox="0 0 19 20"><path d="M2 0.300h11.500a1.200 1.200 0 0 1 1.200 1.200v17h-12.700z" fill="url(#fg2)"/><path d="M11.5 3.5c4 1.500 5.500 5 3.500 9.500c.3-3-.8-5-2.300-5.500v9a3 2.500 0 1 1-1.200-2z" fill="#2f8ee6"/><path d="M0 1q0-.7 .7-.7h6l1.100 .7v18.400l-2 .6h-3.800l-2-1z" fill="url(#fg1)"/></svg>
<span class="t" style="left:218.0px;top:325.2px;font-size:14.5px;color:#1e1e1e;transform:scaleX(1.043);">Music</span>
<svg style="left:193px;top:347px" width="19" height="20" viewBox="0 0 19 20"><path d="M2 0.300h11.500a1.200 1.200 0 0 1 1.200 1.200v17h-12.700z" fill="url(#fg2)"/><rect x="7" y="6" width="11" height="11.5" fill="#f4f6f8" stroke="#a8b0bc" stroke-width=".8"/><rect x="8.5" y="8" width="8" height="3.500" fill="#6aaeea"/><rect x="8.5" y="11.500" width="8" height="3" fill="#5a9a5a"/><path d="M0 1q0-.7 .7-.7h6l1.100 .7v18.400l-2 .6h-3.800l-2-1z" fill="url(#fg1)"/></svg>
<span class="t" style="left:218.0px;top:351.2px;font-size:14.5px;color:#1e1e1e;transform:scaleX(1.002);">Pictures</span>
<svg style="left:193px;top:373px" width="19" height="20" viewBox="0 0 19 20"><path d="M2 0.300h11.500a1.200 1.200 0 0 1 1.200 1.200v17h-12.700z" fill="url(#fg2)"/><rect x="7.500" y="6" width="10" height="12.500" fill="#2c2c34"/><rect x="9.800" y="7" width="5.400" height="4.600" fill="#5a8fd0"/><rect x="9.800" y="13" width="5.400" height="4.600" fill="#5a8fd0"/><path d="M8.600 6v12.500M16.400 6v12.500" stroke="#ddd" stroke-width="1" stroke-dasharray="1.2 1.2"/><path d="M0 1q0-.7 .7-.7h6l1.100 .7v18.400l-2 .6h-3.800l-2-1z" fill="url(#fg1)"/></svg>
<span class="t" style="left:218.0px;top:377.2px;font-size:14.5px;color:#1e1e1e;transform:scaleX(0.987);">Videos</span>
<div class="r" style="left:156px;top:397px;width:173px;height:26px;background:#f3f3f3;border:1px solid #dcdcdc;"></div>
<svg style="left:192px;top:399.500px" width="20.500" height="20" viewBox="0 0 20.500 20"><defs><linearGradient id="dg" x1="0" x2="0" y1="0" y2="1"><stop offset="0" stop-color="#6a8896"/><stop offset="1" stop-color="#2a4450"/></linearGradient></defs><rect x="1.200" y="0.300" width="4.600" height="4.500" fill="#0cc4f6"/><rect x="6.500" y="0.300" width="4.600" height="4.500" fill="#0cc4f6"/><rect x="1.200" y="5.500" width="4.600" height="4.500" fill="#0cc4f6"/><rect x="6.500" y="5.500" width="4.600" height="4.500" fill="#0cc4f6"/><path d="M11.500 9.500h5.500l3.300 4h-20.100l1.500-3h9.800z" fill="#d4d9dd"/><rect x="0" y="13.200" width="20.300" height="6.300" rx="1.200" fill="url(#dg)"/><rect x="14.800" y="15.300" width="1.800" height="2.600" fill="#5ae05a"/></svg>
<span class="t" style="left:218.6px;top:403.1px;font-size:14.5px;color:#1e1e1e;transform:scaleX(0.934);">OSDisk (C:)</span>
<svg style="left:179px;top:451px" width="21" height="21" viewBox="0 0 21 21"><circle cx="6.500" cy="7" r="6" fill="#3aa0e8"/><path d="M3 3.500c2-1.500 4-1 5 .5c-.5 2-2 2-2.500 4c-1.500 0-3-1.500-2.500-4.500zM6 10c1.500-.5 3 .5 3 2c-1 .8-2.500 .8-3-2z" fill="#4ac24a"/><rect x="9" y="7" width="11.500" height="9" fill="#d8dde4" stroke="#7a8494" stroke-width=".6"/><rect x="10.300" y="8.200" width="9" height="6.500" fill="#1a2fd0"/><rect x="13.500" y="16" width="2.500" height="2.500" fill="#8a929c"/><rect x="11.500" y="18.300" width="6.500" height="1.500" fill="#8a929c"/></svg>
<span class="t" style="left:206.0px;top:455.3px;font-size:14.5px;color:#1e1e1e;transform:scaleX(1.053);">Network</span>
<div class="r" style="left:1008px;top:507px;width:1px;height:204px;background:#dcdcdc;"></div>
<span class="t" style="left:237.3px;top:527.7px;font-size:14.5px;color:#1e1e1e;transform:scaleX(0.976);">File <u>n</u>ame:</span>
<span class="t" style="left:221.0px;top:559.2px;font-size:14.5px;color:#1e1e1e;transform:scaleX(0.938);">Save as <u>t</u>ype:</span>
<div class="r" style="left:310px;top:520.4px;width:692px;height:27.8px;background:#fff;border:1px solid #b4b8c0;"></div>
<span class="t" style="left:317.7px;top:527.2px;font-size:14.5px;color:#1e1e1e;transform:scaleX(1.041);">Untitled-1.psd</span>
<div class="r" style="left:310px;top:551.5px;width:692px;height:27.8px;background:linear-gradient(#f2f2f2,#e6e6e6);border:1px solid #b8b8b8;"></div>
<span class="t" style="left:315.5px;top:559.2px;font-size:14.5px;color:#1e1e1e;transform:scaleX(0.983);">Photoshop (*.PSD;*.PDD)</span>
<svg style="left:987px;top:531px" width="10" height="7"><path d="M1 1L5 5.500L9 1" fill="none" stroke="#4a4a4a" stroke-width="2"/></svg>
<svg style="left:987px;top:562px" width="10" height="7"><path d="M1 1L5 5.500L9 1" fill="none" stroke="#4a4a4a" stroke-width="2"/></svg>
<span class="t" style="left:310.5px;top:596.2px;font-size:14.5px;color:#1e1e1e;transform:scaleX(0.982);">Save Options</span>
<span class="t" style="left:301.8px;top:619.9px;font-size:14.5px;color:#6d6d6d;transform:scaleX(0.858);">Save:</span>
<div class="r" style="left:341px;top:620px;width:16px;height:16px;background:#fff;border:1px solid #4a4a4a;"></div>
<svg style="left:343px;top:622px" width="12" height="12" viewBox="0 0 12 12"><path d="M1.500 6.500L4.500 10L10.500 1.800" fill="none" stroke="#111" stroke-width="2.3"/></svg>
<span class="t" style="left:361.7px;top:619.9px;font-size:14.5px;color:#1a5fd0;transform:scaleX(0.976);">As a Cop<u>y</u></span>
<div class="r" style="left:341px;top:647px;width:16px;height:16px;background:#e6e6e6;border:1px solid #c4c4c4;"></div>
<span class="t" style="left:361.7px;top:646.7px;font-size:14.5px;color:#6d6d6d;transform:scaleX(0.998);">N<u>o</u>tes</span>
<div class="r" style="left:341px;top:674.5px;width:16px;height:16px;background:#e6e6e6;border:1px solid #c4c4c4;"></div>
<span class="t" style="left:361.7px;top:673.7px;font-size:14.5px;color:#6d6d6d;transform:scaleX(0.999);">Alpha Chann<u>e</u>ls</span>
<div class="r" style="left:341px;top:701.5px;width:16px;height:16px;background:#e6e6e6;border:1px solid #c4c4c4;"></div>
<span class="t" style="left:361.7px;top:700.7px;font-size:14.5px;color:#6d6d6d;transform:scaleX(0.928);">Spot Colors</span>
<span class="t" style="left:607.0px;top:596.2px;font-size:14.5px;color:#6d6d6d;transform:scaleX(0.995);">Color:</span>
<div class="r" style="left:652px;top:596px;width:16px;height:16px;background:#e6e6e6;border:1px solid #c4c4c4;"></div>
<span class="t" style="left:672.9px;top:596.2px;font-size:14.5px;color:#6d6d6d;transform:scaleX(0.965);">Use Pr<u>o</u>of Setup:</span>
<span class="t" style="left:672.9px;top:614.5px;font-size:14.5px;color:#6d6d6d;transform:scaleX(1.013);">Working CMYK</span>
<div class="r" style="left:652px;top:642px;width:16px;height:16px;background:#fff;border:1px solid #4a4a4a;"></div>
<span class="t" style="left:672.9px;top:641.7px;font-size:14.5px;color:#1a5fd0;transform:scaleX(0.940);white-space:pre;">I<u>C</u>C Profile:&nbsp; sRGB</span>
<span class="t" style="left:672.9px;top:660.3px;font-size:14.5px;color:#1a5fd0;transform:scaleX(0.912);">IEC61966-2.1</span>
<div class="r" style="left:622px;top:686px;width:197px;height:1px;background:#a0a0a0;"></div>
<span class="t" style="left:606.0px;top:693.7px;font-size:14.5px;color:#6d6d6d;transform:scaleX(0.980);">Other:</span>
<div class="r" style="left:652px;top:694.5px;width:16px;height:16px;background:#e6e6e6;border:1px solid #c4c4c4;"></div>
<svg style="left:654px;top:697px" width="12" height="12" viewBox="0 0 12 12"><path d="M1.500 6.500L4.500 10L10.500 1.800" fill="none" stroke="#8a8a8a" stroke-width="2.2"/></svg>
<span class="t" style="left:672.9px;top:693.7px;font-size:14.5px;color:#6d6d6d;transform:scaleX(1.050);">Thumbnail</span>
<svg style="left:0;top:0" width="1038" height="703"><path d="M334.500 458.400V495" stroke="#ff0000" stroke-width="5" stroke-linecap="round"/><path d="M326.800 492H342.400L334.600 517.500Z" fill="#ff0000"/><path d="M364.500 615.400L381 586" stroke="#ff0000" stroke-width="4.600" stroke-linecap="round"/><path d="M391.400 568L373 585.300L386.200 592.800Z" fill="#ff0000"/></svg>

</body></html>
